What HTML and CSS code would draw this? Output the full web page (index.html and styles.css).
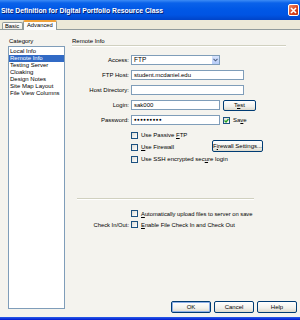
FILE: index.html
```html
<!DOCTYPE html>
<html lang="en">

<head>
    <meta charset="UTF-8" />
    <title>Site Definition</title>
    <link rel="stylesheet" href="styles.css">
</head>

<body>
    <div class="window">
        <div class="titlebar">
            <span class="title">Site Definition for Digital Portfolio Resource Class</span>
            <span class="close">
                <svg width="7" height="7" viewBox="0 0 7 7">
                    <path d="M1 1 L6 6 M6 1 L1 6" stroke="#fff" stroke-width="1.6" />
                </svg>
            </span>
        </div>

        <div class="tabs">
            <span class="tab">Basic</span>
            <span class="tab active">Advanced</span>
        </div>

        <div class="panel">
            <div class="category">
                <div class="category-label">Category</div>
                <ul class="list">
                    <li>Local Info</li>
                    <li class="selected">Remote Info</li>
                    <li>Testing Server</li>
                    <li>Cloaking</li>
                    <li>Design Notes</li>
                    <li>Site Map Layout</li>
                    <li>File View Columns</li>
                </ul>
            </div>

            <div class="content">
                <div class="heading">Remote Info</div>

                <div class="form">
                    <label>Access:</label>
                    <div class="select narrow">
                        FTP
                        <span class="arrow">
                            <svg width="5" height="4" viewBox="0 0 5 4">
                                <path d="M0.5 0.8 L2.5 2.8 L4.5 0.8" stroke="#4d6185" stroke-width="1.1" fill="none" />
                            </svg>
                        </span>
                    </div>

                    <label>FTP Host:</label>
                    <div class="input wide">student.mcdaniel.edu</div>

                    <label>Host Directory:</label>
                    <div class="input wide"></div>

                    <label>Login:</label>
                    <div class="field-pair">
                        <div class="input narrow">sak000</div>
                        <span class="button test"><span>T<u>e</u>st</span></span>
                    </div>

                    <label>Password:</label>
                    <div class="field-pair">
                        <div class="input narrow dots">&#9679;&#9679;&#9679;&#9679;&#9679;&#9679;&#9679;&#9679;&#9679;</div>
                        <span class="check-item">
                            <span class="box checked">
                                <svg width="5" height="5" viewBox="0 0 5 5">
                                    <path d="M0.5 2.5 L2 4 L4.5 1" stroke="#21a121" stroke-width="1.3" fill="none" />
                                </svg>
                            </span>
                            <span>Sa<u>v</u>e</span>
                        </span>
                    </div>
                </div>

                <div class="checks">
                    <div class="check-row">
                        <span class="check-item"><span class="box"></span><span>Use Passive <u>F</u>TP</span></span>
                    </div>
                    <div class="check-row">
                        <span class="check-item firewall"><span class="box"></span><span><u>U</u>se Firewall</span></span>
                        <span class="button firewall-btn"><span>F<u>i</u>rewall Settings...</span></span>
                    </div>
                    <div class="check-row">
                        <span class="check-item"><span class="box"></span><span>Use SSH encrypted sec<u>u</u>re login</span></span>
                    </div>
                </div>

                <div class="separator"></div>

                <div class="lower">
                    <span></span>
                    <span class="check-item"><span class="box"></span><span><u>A</u>utomatically upload files to server on save</span></span>
                    <label>Check In/Out:</label>
                    <span class="check-item"><span class="box"></span><span><u>E</u>nable File Check In and Check Out</span></span>
                </div>

                <div class="footer">
                    <span class="button default">OK</span>
                    <span class="button">Cancel</span>
                    <span class="button">Help</span>
                </div>
            </div>
        </div>

        <div class="frame-bottom"></div>
    </div>
</body>

</html>
```

FILE: styles.css
```css
* {
    box-sizing: border-box;
}

body {
    margin: 0;
    font-family: "Liberation Sans", Arial, sans-serif;
    font-size: 6px;
    color: #000000;
}

u {
    text-underline-offset: 0.5px;
}

.window {
    width: 300px;
    height: 320px;
    overflow: hidden;
    display: flex;
    flex-direction: column;
    background: #f4f3ee;
}

/* Title bar */

.titlebar {
    height: 20px;
    flex: none;
    display: flex;
    align-items: center;
    padding: 0 1px 0 1px;
    background: linear-gradient(to bottom,
            #3d8cf5 0px,
            #0a62ea 3px,
            #0058e6 9px,
            #0054e3 15px,
            #0044c8 20px);
}

.title {
    color: #ffffff;
    font-weight: bold;
    font-size: 6.8px;
    text-shadow: 1px 1px 0 #0a1e6e;
    white-space: nowrap;
}

.close {
    margin-left: auto;
    width: 11px;
    height: 12px;
    display: flex;
    align-items: center;
    justify-content: center;
    border: 1px solid #ffffff;
    border-radius: 2px;
    background: linear-gradient(to bottom right, #f08a68, #d8411c 60%, #c33510);
}

/* Tabs */

.tabs {
    height: 10px;
    flex: none;
    display: flex;
    align-items: flex-end;
    padding-left: 2px;
    background: #ece9d8;
    border-bottom: 1px solid #919b9c;
}

.tab {
    height: 7px;
    width: 21px;
    line-height: 6px;
    padding-left: 2px;
    border: 1px solid #919b9c;
    border-bottom: none;
    border-radius: 2px 2px 0 0;
    background: linear-gradient(#ffffff, #ecebe6);
    font-size: 5.8px;
}

.tab.active {
    height: 10px;
    width: 34px;
    margin-bottom: -1px;
    padding-left: 3px;
    line-height: 7px;
    border-top: 2px solid #f0a23a;
    background: #fcfcfe;
}

/* Panel */

.panel {
    flex: 1;
    display: grid;
    grid-template-columns: 57px 1fr;
    column-gap: 7px;
    padding: 7px 3px 4px 8px;
}

.category-label {
    height: 9px;
    line-height: 8px;
    padding-left: 1px;
}

.list {
    margin: 0;
    padding: 1px 0 0;
    list-style: none;
    height: 263px;
    background: #ffffff;
    border: 1px solid #7f9db9;
}

.list li {
    height: 7px;
    line-height: 7px;
    padding-left: 1px;
    white-space: nowrap;
}

.list li.selected {
    background: #316ac5;
    color: #ffffff;
}

.content {
    display: flex;
    flex-direction: column;
}

.heading {
    height: 9px;
    line-height: 8px;
    margin-right: 11px;
    border-bottom: 1px solid #d0d0bf;
    box-shadow: 0 1px 0 #ffffff;
}

/* Form fields */

.form {
    display: grid;
    grid-template-columns: 57px 1fr;
    grid-auto-rows: 10px;
    column-gap: 2px;
    row-gap: 5px;
    margin-top: 9px;
    align-items: center;
}

.form label,
.lower label {
    text-align: right;
    white-space: nowrap;
}

.input,
.select {
    height: 10px;
    line-height: 8px;
    padding-left: 2px;
    background: #ffffff;
    border: 1px solid #7f9db9;
    white-space: nowrap;
}

.narrow {
    width: 89px;
}

.wide {
    width: 113px;
}

.select {
    position: relative;
    font-size: 6.5px;
}

.select .arrow {
    position: absolute;
    right: 0;
    top: 0;
    width: 8px;
    height: 8px;
    display: flex;
    align-items: center;
    justify-content: center;
    background: linear-gradient(#d8e4fd, #b6cbf7);
    border-left: 1px solid #ffffff;
}

.dots {
    font-size: 4.5px;
    letter-spacing: 0.4px;
}

.field-pair {
    display: flex;
    align-items: center;
    gap: 3px;
}

/* Buttons */

.button {
    height: 12px;
    display: flex;
    align-items: center;
    justify-content: center;
    white-space: nowrap;
    border: 1px solid #003c74;
    border-radius: 2px;
    background: linear-gradient(#ffffff, #f2f1ec 60%, #dcd9cd);
}

.button.test {
    width: 33px;
    height: 11px;
}

.button.default {
    box-shadow: inset 0 0 0 1px #8fb0e8;
}

/* Checkboxes */

.check-item {
    display: flex;
    align-items: center;
    gap: 3px;
    white-space: nowrap;
}

.box {
    width: 7px;
    height: 7px;
    flex: none;
    display: flex;
    align-items: center;
    justify-content: center;
    border: 1px solid #1c5180;
    background: linear-gradient(to bottom right, #dcdcd6, #ffffff);
}

.checks {
    margin-top: 4px;
    padding-left: 59px;
}

.check-row {
    height: 12px;
    display: flex;
    align-items: center;
}

.check-item.firewall {
    width: 81px;
}

.firewall-btn {
    width: 51px;
    margin-bottom: 3px;
}

.separator {
    width: 177px;
    margin: 33px 0 0 5px;
    border-top: 1px solid #d0d0bf;
    border-bottom: 1px solid #ffffff;
}

.lower {
    display: grid;
    grid-template-columns: 57px 1fr;
    grid-auto-rows: 11px;
    column-gap: 2px;
    align-items: center;
    margin-top: 8px;
    font-size: 5.8px;
}

.footer {
    margin-top: auto;
    display: flex;
    justify-content: flex-end;
    gap: 3px;
}

.footer .button {
    width: 40px;
}

.frame-bottom {
    height: 3px;
    flex: none;
    background: linear-gradient(#2a5ee8, #0019cf);
}
```
